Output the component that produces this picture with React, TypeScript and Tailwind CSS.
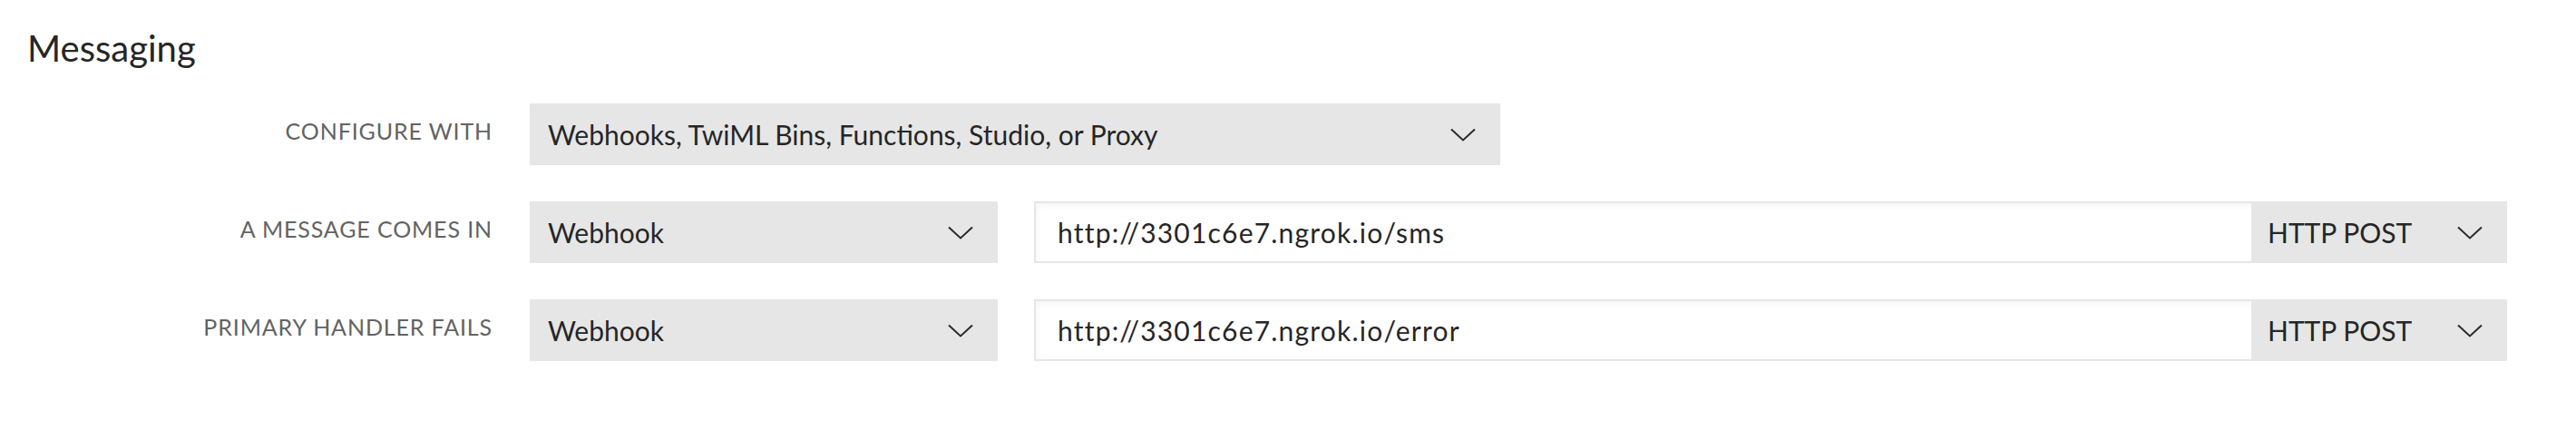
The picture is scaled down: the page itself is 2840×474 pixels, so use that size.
import * as React from "react";
import clsx from "clsx";

function Chevron() {
  return (
    <svg width="28" height="15" viewBox="0 0 28 15" fill="none" className="shrink-0">
      <path d="M1 1.5 14 13.5 27 1.5" stroke="#2b2b2b" strokeWidth="2" />
    </svg>
  );
}

function Select({ value, className }: { value: string; className?: string }) {
  return (
    <div
      className={clsx(
        "flex h-[68px] shrink-0 items-center justify-between bg-[#e6e6e6] pl-5 pr-[27px] text-[30px] text-[#262626]",
        className
      )}
    >
      <span>{value}</span>
      <Chevron />
    </div>
  );
}

function UrlField({ url }: { url: string }) {
  return (
    <div className="flex h-[68px]">
      <div className="flex w-[1342px] items-center border-2 border-r-0 border-[#e6e6e6] pl-6 text-[30px] tracking-[0.04em] text-[#262626] shadow-[inset_2px_3px_6px_rgba(0,0,0,0.035)]">
        {url}
      </div>
      <Select value="HTTP POST" className="w-[282px] pl-[18px]" />
    </div>
  );
}

function Row({ label, children }: { label: string; children: React.ReactNode }) {
  return (
    <div className="flex gap-[41px]">
      <div className="w-[513px] shrink-0 pt-[15px] text-right text-[25px] uppercase leading-[30px] tracking-[0.035em] text-[#636363]">
        {label}
      </div>
      <div className="flex gap-10">{children}</div>
    </div>
  );
}

export default function App() {
  return (
    <div className="bg-white pl-[30px] pt-[30px] font-['Lato',sans-serif]">
      <h2 className="text-[40px] font-normal leading-[47px] text-[#262626]">Messaging</h2>
      <div className="mt-[37px] flex flex-col gap-10">
        <Row label="Configure with">
          <Select value="Webhooks, TwiML Bins, Functions, Studio, or Proxy" className="w-[1070px]" />
        </Row>
        <Row label="A message comes in">
          <Select value="Webhook" className="w-[516px]" />
          <UrlField url="http://3301c6e7.ngrok.io/sms" />
        </Row>
        <Row label="Primary handler fails">
          <Select value="Webhook" className="w-[516px]" />
          <UrlField url="http://3301c6e7.ngrok.io/error" />
        </Row>
      </div>
    </div>
  );
}
